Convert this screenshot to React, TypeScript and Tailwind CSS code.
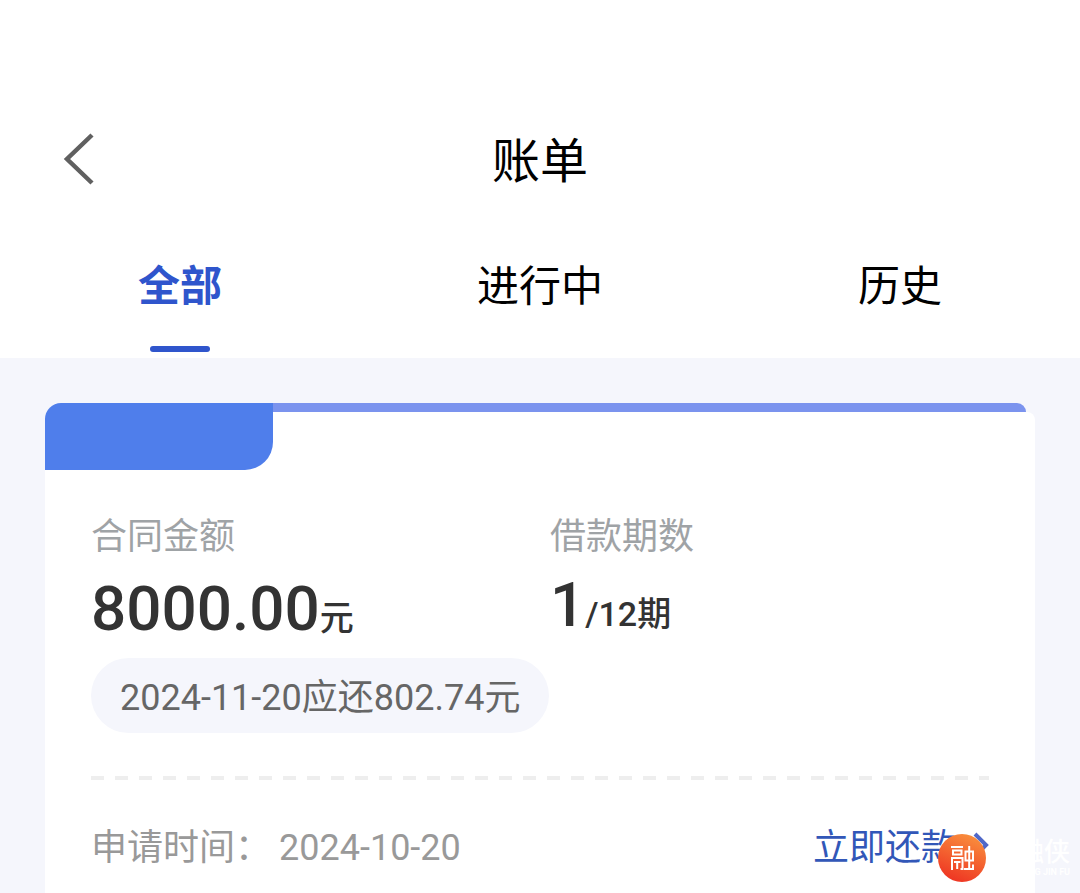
import React, { useState } from 'react';

const tabs = [
  { id: 'all', label: '全部' },
  { id: 'active', label: '进行中' },
  { id: 'history', label: '历史' },
];

function BackIcon() {
  return (
    <svg width="34" height="54" viewBox="0 0 34 54" fill="none" stroke="#606060" strokeWidth="4.5">
      <path d="M30 2 L5 26 L30 50" />
    </svg>
  );
}

function Watermark() {
  return (
    <div className="absolute right-[10px] bottom-[11px] flex items-center gap-[30px] text-white" aria-hidden="true">
      <svg width="48" height="48" viewBox="0 0 48 48" fill="none">
        <defs>
          <linearGradient id="badge" x1="0.7" y1="0" x2="0.3" y2="1">
            <stop offset="0" stopColor="#f98f3d" />
            <stop offset="1" stopColor="#ee3322" />
          </linearGradient>
        </defs>
        <circle cx="24" cy="24" r="24" fill="url(#badge)" />
        <g stroke="#fff" strokeWidth="2">
          <path d="M13 13 H25 M15 16.5 H23.5 V20.5 H15 Z M14 36 V24 H24.5 V35 H22.5 M16 28 H22.5 M19.2 28 V35" />
          <path d="M27.5 17.5 H35 V26.5 H27.5 Z M31.2 12 V35 M26 35 H36 M35 30.5 V36" />
        </g>
      </svg>
      <div className="flex flex-col items-end">
        <span className="text-[26px] leading-7 font-medium">融侠</span>
        <span className="text-[9px] leading-3 font-bold">RONG JIN FU</span>
      </div>
    </div>
  );
}

export default function App() {
  const [active, setActive] = useState('all');

  return (
    <div className="relative h-screen overflow-hidden bg-[#f5f6fc] font-[Roboto,'Noto_Sans_CJK_SC',sans-serif]">
      {/* Header */}
      <header className="bg-white pt-[118px]">
        <div className="grid grid-cols-3 items-center h-20">
          <button aria-label="返回" className="justify-self-start ml-[62px]">
            <BackIcon />
          </button>
          <h1 className="pt-1 text-center text-[48px] leading-[80px] text-black">账单</h1>
        </div>

        <nav className="grid grid-cols-3 pt-12">
          {tabs.map(tab => (
            <button
              key={tab.id}
              onClick={() => setActive(tab.id)}
              className={`flex flex-col items-center h-28 text-[42px] leading-[82px] ${
                active === tab.id ? 'font-bold text-[#2f55cc]' : 'text-black'
              }`}
            >
              {tab.label}
              {active === tab.id && <span className="mt-[18px] w-[60px] h-[6px] rounded-full bg-[#2f55cc]" />}
            </button>
          ))}
        </nav>
      </header>

      {/* Bill card */}
      <main className="mx-[45px] mt-[45px]">
        <div className="flex h-[67px]">
          <div className="w-[228px] rounded-tl-2xl bg-white">
            <div className="h-full rounded-tl-2xl rounded-br-[28px] bg-[#4f7eeb]" />
          </div>
          <div className="flex flex-1 flex-col">
            <div className="mr-[9px] h-[9px] rounded-tr-xl bg-[#7b93ee]" />
            <div className="flex-1 rounded-tr-lg bg-white" />
          </div>
        </div>

        <div className="min-h-screen bg-white px-[46px] pt-[42px]">
          <div className="grid grid-cols-[459px_1fr] text-[#333]">
            <div>
              <p className="text-[36px] leading-[50px] text-[#9fa3a6]">合同金额</p>
              <p className="text-[62px] leading-[94px] font-medium">
                8000.00<span className="text-[34px] leading-none">元</span>
              </p>
            </div>
            <div>
              <p className="text-[36px] leading-[50px] text-[#9fa3a6]">借款期数</p>
              <p className="text-[62px] leading-[86px] font-medium">
                1<span className="text-[34px] leading-none">/12期</span>
              </p>
            </div>
          </div>

          <p className="mt-[2px] w-fit rounded-full bg-[#f5f6fc] px-[29px] pt-[5px] text-[36px] leading-[70px] text-[#666]">
            2024-11-20应还802.74元
          </p>

          <svg className="mt-[43px] block w-full" height="4">
            <line x1="0" y1="2" x2="100%" y2="2" stroke="#eeeeee" strokeWidth="4" strokeDasharray="13 11" />
          </svg>

          <div className="flex items-center justify-between pt-[38px] text-[36px] leading-[60px]">
            <p className="text-[#999]">
              <span>申请时间：</span>
              <time className="ml-2">2024-10-20</time>
            </p>
            <a href="#repay" className="flex items-center gap-3 text-[#3257b8]">
              立即还款
              <svg width="20" height="32" viewBox="0 0 20 32" fill="none" stroke="#5068c8" strokeWidth="4">
                <path d="M6 2 L17 13 L6 24" />
              </svg>
            </a>
          </div>
        </div>
      </main>

      <Watermark />
    </div>
  );
}
